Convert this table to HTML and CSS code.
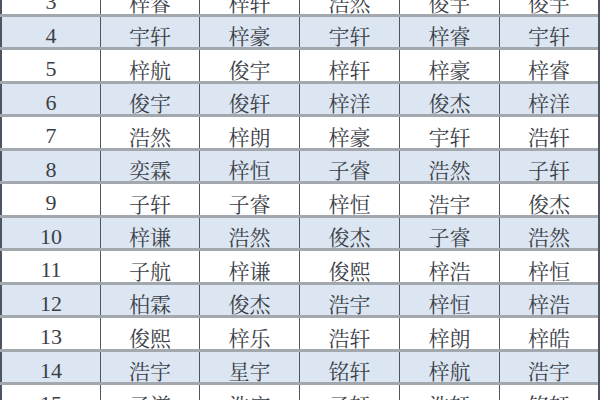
FILE: index.html
```html
<!DOCTYPE html>
<html lang="zh">
<head>
<meta charset="utf-8">
<link rel="stylesheet" href="styles.css">
</head>
<body>
<div class="sheet">
  <div class="row"><div class="cell num">3</div><div class="cell">梓睿</div><div class="cell">梓轩</div><div class="cell">浩然</div><div class="cell">俊宇</div><div class="cell">俊宇</div></div>
  <div class="row alt"><div class="cell num">4</div><div class="cell">宇轩</div><div class="cell">梓豪</div><div class="cell">宇轩</div><div class="cell">梓睿</div><div class="cell">宇轩</div></div>
  <div class="row"><div class="cell num">5</div><div class="cell">梓航</div><div class="cell">俊宇</div><div class="cell">梓轩</div><div class="cell">梓豪</div><div class="cell">梓睿</div></div>
  <div class="row alt"><div class="cell num">6</div><div class="cell">俊宇</div><div class="cell">俊轩</div><div class="cell">梓洋</div><div class="cell">俊杰</div><div class="cell">梓洋</div></div>
  <div class="row"><div class="cell num">7</div><div class="cell">浩然</div><div class="cell">梓朗</div><div class="cell">梓豪</div><div class="cell">宇轩</div><div class="cell">浩轩</div></div>
  <div class="row alt"><div class="cell num">8</div><div class="cell">奕霖</div><div class="cell">梓恒</div><div class="cell">子睿</div><div class="cell">浩然</div><div class="cell">子轩</div></div>
  <div class="row"><div class="cell num">9</div><div class="cell">子轩</div><div class="cell">子睿</div><div class="cell">梓恒</div><div class="cell">浩宇</div><div class="cell">俊杰</div></div>
  <div class="row alt"><div class="cell num">10</div><div class="cell">梓谦</div><div class="cell">浩然</div><div class="cell">俊杰</div><div class="cell">子睿</div><div class="cell">浩然</div></div>
  <div class="row"><div class="cell num">11</div><div class="cell">子航</div><div class="cell">梓谦</div><div class="cell">俊熙</div><div class="cell">梓浩</div><div class="cell">梓恒</div></div>
  <div class="row alt"><div class="cell num">12</div><div class="cell">柏霖</div><div class="cell">俊杰</div><div class="cell">浩宇</div><div class="cell">梓恒</div><div class="cell">梓浩</div></div>
  <div class="row"><div class="cell num">13</div><div class="cell">俊熙</div><div class="cell">梓乐</div><div class="cell">浩轩</div><div class="cell">梓朗</div><div class="cell">梓皓</div></div>
  <div class="row alt"><div class="cell num">14</div><div class="cell">浩宇</div><div class="cell">星宇</div><div class="cell">铭轩</div><div class="cell">梓航</div><div class="cell">浩宇</div></div>
  <div class="row"><div class="cell num">15</div><div class="cell">子谦</div><div class="cell">浩宇</div><div class="cell">子轩</div><div class="cell">浩轩</div><div class="cell">铭轩</div></div>
</div>
</body>
</html>
```
FILE: styles.css
```css
html, body {
  margin: 0;
  padding: 0;
  background: #ffffff;
  overflow: hidden;
}
body {
  width: 600px;
  height: 400px;
  font-family: "Noto Serif CJK SC", "Liberation Serif", "Noto Sans CJK SC", serif;
  color: #3b4047;
}
.sheet {
  margin-top: -17px;
  width: 600px;
  border-right: 2px solid #4d5660;
  box-sizing: border-box;
}
.row {
  display: grid;
  grid-template-columns: 100px 99px 100px 100px 100px 99px;
  height: 33.5px;
  box-sizing: border-box;
  border-bottom: 3px solid #a2a8ae;
  background: #ffffff;
}
.row.alt {
  background: #dce6f2;
}
.cell {
  display: flex;
  align-items: center;
  justify-content: center;
  padding-top: 8px;
  box-sizing: border-box;
  border-left: 1px solid #4d5660;
  font-size: 21px;
  line-height: 1;
}
.cell:first-child {
  border-left: 2px solid #4d5660;
}
.num {
  font-family: "Liberation Serif", serif;
  font-size: 22px;
}
```
